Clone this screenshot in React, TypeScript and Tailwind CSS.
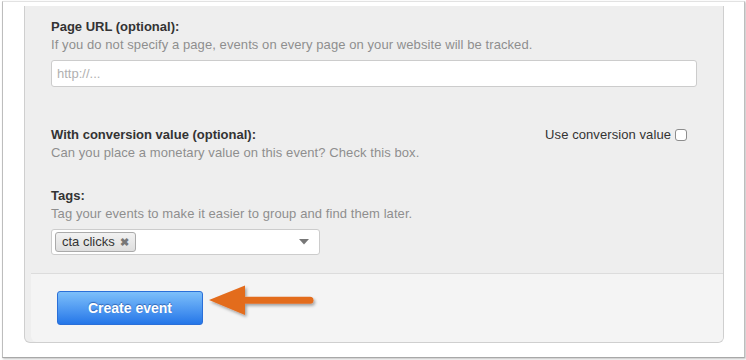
const Field = ({ label, hint }: { label: string; hint: string }) => (
  <>
    <div className="text-[13px] leading-[18px] font-bold text-[#333]">{label}</div>
    <div className="text-[13px] leading-[18px] tracking-[0.08px] text-[#8e8e8e]">{hint}</div>
  </>
);

const Arrow = () => (
  <svg width="112" height="38" viewBox="0 0 112 38" className="absolute left-[175px] top-[10px]">
    <defs>
      <filter id="sh" x="-20%" y="-40%" width="140%" height="180%">
        <feDropShadow dx="1.5" dy="2" stdDeviation="1.5" floodColor="#000" floodOpacity="0.35" />
      </filter>
    </defs>
    <g filter="url(#sh)">
      <path d="M3 16 L39 1.5 L39 31 Z" fill="#e36c1f" />
      <line x1="38" y1="16.3" x2="104" y2="16.3" stroke="#e36c1f" strokeWidth="7" strokeLinecap="round" />
    </g>
  </svg>
);

export default function App() {
  return (
    <div className="w-[746px] h-[360px] bg-white" style={{ fontFamily: '"Liberation Sans", Arial, sans-serif' }}>
      <div className="ml-[2px] mt-[1px] w-[743px] h-[357px] bg-white border border-t-[#e2e2e2] border-l-[#bdbdbd] border-r-[#bdbdbd] border-b-[#a8a8a8] shadow-[1px_1px_2px_rgba(0,0,0,0.25)] pl-[21px] pt-[4px]">
        <div className="w-[700px] bg-[#eeeeee] border-x border-b border-[#cfcfcf] rounded-b-[6px]">
          <div className="pl-[26px] pr-[26px] pt-[12px] pb-[18px]">
            <Field label="Page URL (optional):" hint="If you do not specify a page, events on every page on your website will be tracked." />
            <div className="mt-[6px] h-[27px] bg-white border border-[#cccccc] rounded-[3px] flex items-center px-[5px] text-[13px] text-[#b0b0b0]">
              http://...
            </div>

            <div className="mt-[39px] flex justify-between">
              <div>
                <Field label="With conversion value (optional):" hint="Can you place a monetary value on this event? Check this box." />
              </div>
              <label className="flex items-start gap-[4px] pr-[10px] text-[13px] leading-[18px] tracking-[0.08px] text-[#333]">
                Use conversion value
                <span className="mt-[3px] w-[12px] h-[12px] bg-white border border-[#8d8d8d] rounded-[3px]" />
              </label>
            </div>

            <div className="mt-[25px]">
              <Field label="Tags:" hint="Tag your events to make it easier to group and find them later." />
            </div>
            <div className="mt-[6px] w-[269px] h-[26px] bg-white border border-[#cccccc] rounded-[3px] flex items-center justify-between pl-[3px] pr-[10px]">
              <span className="h-[20px] flex items-center gap-[5px] px-[6px] bg-gradient-to-b from-[#f2f2f2] to-[#dedede] border border-[#aaaaaa] rounded-[3px] text-[13px] text-[#333]">
                cta clicks
                <span className="text-[11px] font-bold text-[#777] leading-none">✖</span>
              </span>
              <svg width="10" height="6" viewBox="0 0 10 6">
                <path d="M0 0 L10 0 L5 5.5 Z" fill="#777" />
              </svg>
            </div>
          </div>

          <div className="relative ml-[6px] h-[69px] bg-[#f4f4f4] border-t border-[#dcdcdc] rounded-bl-[6px] rounded-br-[5px] pl-[26px] pt-[17px]">
            <button className="w-[146px] h-[34px] rounded-[3px] border border-[#2a6fd8] bg-gradient-to-b from-[#7dbffa] to-[#2476e8] text-white text-[14px] font-bold [text-shadow:0_-1px_1px_rgba(0,40,120,0.5)]">
              Create event
            </button>
            <Arrow />
          </div>
        </div>
      </div>
    </div>
  );
}
